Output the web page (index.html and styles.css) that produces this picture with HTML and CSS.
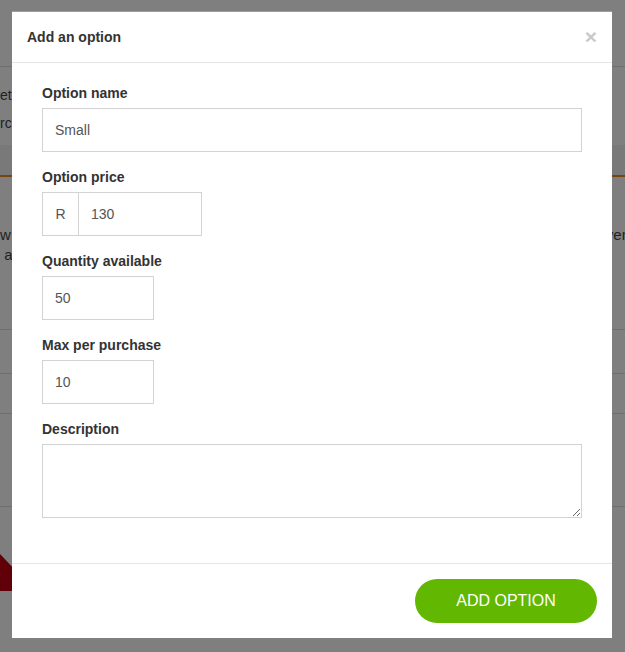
FILE: index.html
```html
<!DOCTYPE html>
<html>
<head>
<meta charset="utf-8">
<title>Add an option</title>
<link rel="stylesheet" href="styles.css">
</head>
<body>
<div class="page">
  <div class="topbar"></div>
  <div class="intro">
    <p class="line">etween sessions and ticket types</p>
    <p class="line">rchase limits apply per order</p>
  </div>
  <div class="band"></div>
  <div class="info">
    <div class="info-row"><span>w ticket options appear to buyers</span><span class="tail">seven</span></div>
    <div class="info-row"><span>&nbsp;and how they are priced</span></div>
  </div>
  <div class="rows">
    <div class="row r1"></div>
    <div class="row r2"></div>
    <div class="row r3"></div>
    <div class="row r4"></div>
  </div>
  <div class="pic"></div>
</div>

<div class="backdrop"></div>

<div class="modal-wrap">
  <div class="modal">
    <div class="modal-header">
      <h4 class="modal-title">Add an option</h4>
      <span class="close">&times;</span>
    </div>
    <div class="modal-body">
      <div class="group">
        <label class="label">Option name</label>
        <input class="field" type="text" value="Small">
      </div>
      <div class="group">
        <label class="label">Option price</label>
        <div class="input-group">
          <span class="addon">R</span>
          <input class="field price" type="text" value="130">
        </div>
      </div>
      <div class="group">
        <label class="label">Quantity available</label>
        <input class="field small" type="text" value="50">
      </div>
      <div class="group">
        <label class="label">Max per purchase</label>
        <input class="field small" type="text" value="10">
      </div>
      <div class="group">
        <label class="label">Description</label>
        <textarea class="field area"></textarea>
      </div>
    </div>
    <div class="modal-footer">
      <button class="btn-add" type="button">ADD OPTION</button>
    </div>
  </div>
</div>
</body>
</html>
```
FILE: styles.css
```css
html, body {
  margin: 0;
  padding: 0;
  height: 100%;
  overflow: hidden;
}
body {
  font-family: "Liberation Sans", Arial, sans-serif;
  background: #fff;
  color: #444;
}

/* background page */
.page {
  width: 625px;
  overflow: hidden;
}
.topbar {
  height: 66px;
  border-bottom: 1px solid #ddd;
}
.intro {
  padding-top: 14px;
  height: 64px;
}
.line {
  margin: 0;
  font-size: 14px;
  line-height: 28px;
  white-space: nowrap;
  color: #444;
}
.band {
  height: 30px;
  background: #f3f3f3;
  border-bottom: 2px solid #f08a24;
}
.info {
  padding-top: 48px;
  height: 104px;
}
.info-row {
  display: flex;
  justify-content: space-between;
  font-size: 15px;
  line-height: 20px;
  white-space: nowrap;
}
.tail {
  margin-right: -5px;
}
.rows {
  display: flex;
  flex-direction: column;
}
.row {
  border-top: 1px solid #ddd;
}
.r1 { height: 43px; }
.r2 { height: 39px; }
.r3 { height: 92px; }
.r4 { height: 41px; }
.pic {
  margin-top: 6px;
  width: 14px;
  height: 37px;
  background: #c00010;
  clip-path: polygon(0 0, 100% 40%, 100% 100%, 0 100%);
}

/* overlay */
.backdrop {
  position: fixed;
  inset: 0;
  background: rgba(0, 0, 0, 0.5);
}
.modal-wrap {
  position: fixed;
  inset: 0;
  padding: 11px 13px 0 12px;
}
.modal {
  width: 600px;
  background: #fff;
  border-top: 1px solid #f08a2c;
}
.modal-header {
  display: flex;
  justify-content: space-between;
  align-items: center;
  padding: 15px;
  border-bottom: 1px solid #e5e5e5;
}
.modal-title {
  margin: 0;
  font-size: 14px;
  line-height: 20px;
  font-weight: bold;
  color: #333;
}
.close {
  font-size: 21px;
  font-weight: bold;
  line-height: 20px;
  color: #c9c9c9;
}
.modal-body {
  padding: 20px 30px 30px;
}
.group {
  display: flex;
  flex-direction: column;
  align-items: flex-start;
  margin-bottom: 15px;
}
.label {
  font-size: 14px;
  line-height: 20px;
  font-weight: bold;
  color: #333;
  margin-bottom: 5px;
}
.field {
  box-sizing: border-box;
  height: 44px;
  width: 540px;
  margin: 0;
  padding: 0 12px;
  border: 1px solid #d3d3d3;
  border-radius: 0;
  font-family: "Liberation Sans", Arial, sans-serif;
  font-size: 14px;
  color: #555;
  background: #fff;
  outline: none;
}
.field.small {
  width: 112px;
}
.input-group {
  display: flex;
}
.addon {
  box-sizing: border-box;
  width: 37px;
  height: 44px;
  display: flex;
  align-items: center;
  justify-content: center;
  border: 1px solid #d3d3d3;
  font-size: 14px;
  color: #555;
}
.field.price {
  width: 123px;
  border-left: 0;
}
.field.area {
  height: 74px;
  padding: 8px 12px;
  resize: vertical;
}
.modal-footer {
  display: flex;
  justify-content: flex-end;
  padding: 15px;
  border-top: 1px solid #e5e5e5;
}
.btn-add {
  width: 182px;
  height: 44px;
  border: 0;
  border-radius: 22px;
  background: #62b700;
  color: #fff;
  font-family: "Liberation Sans", Arial, sans-serif;
  font-size: 16px;
  padding: 0;
}
```
